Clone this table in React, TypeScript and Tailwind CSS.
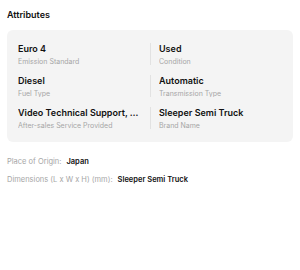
import React from 'react';

type Attr = { value: string; label: string };

const attrs: Attr[] = [
  { value: 'Euro 4', label: 'Emission Standard' },
  { value: 'Used', label: 'Condition' },
  { value: 'Diesel', label: 'Fuel Type' },
  { value: 'Automatic', label: 'Transmission Type' },
  { value: 'Video Technical Support, Online Support', label: 'After-sales Service Provided' },
  { value: 'Sleeper Semi Truck', label: 'Brand Name' },
];

const App: React.FC = () => {
  return (
    <div className="min-h-screen w-[300px] bg-white px-[7px] pt-[10px] font-['Inter',sans-serif] text-[#111]">
      <h2 className="text-[9px] font-semibold leading-[10px]">Attributes</h2>

      <div className="mt-[10px] rounded-[6px] bg-[#f4f4f4] px-[11px] py-[13px]">
        <div className="grid grid-cols-2 gap-y-[10px]">
          {attrs.map((a, i) => (
            <div
              key={a.label}
              className={i % 2 === 1 ? 'min-w-0 border-l border-[#e2e2e2] pl-[8px]' : 'min-w-0 pr-[8px]'}
            >
              <div className="truncate text-[9px] font-semibold leading-[12px]">{a.value}</div>
              <div className="mt-[3px] truncate text-[7px] leading-[7px] text-[#a6a6a6]">{a.label}</div>
            </div>
          ))}
        </div>
      </div>

      <div className="mt-[15px] flex flex-col gap-[8px] text-[7.5px] leading-[10px]">
        <div className="flex gap-[5px]">
          <span className="text-[#a6a6a6]">Place of Origin:</span>
          <span className="font-semibold">Japan</span>
        </div>
        <div className="flex gap-[5px]">
          <span className="text-[#a6a6a6]">Dimensions (L x W x H) (mm):</span>
          <span className="font-semibold">Sleeper Semi Truck</span>
        </div>
      </div>
    </div>
  );
};

export default App;
